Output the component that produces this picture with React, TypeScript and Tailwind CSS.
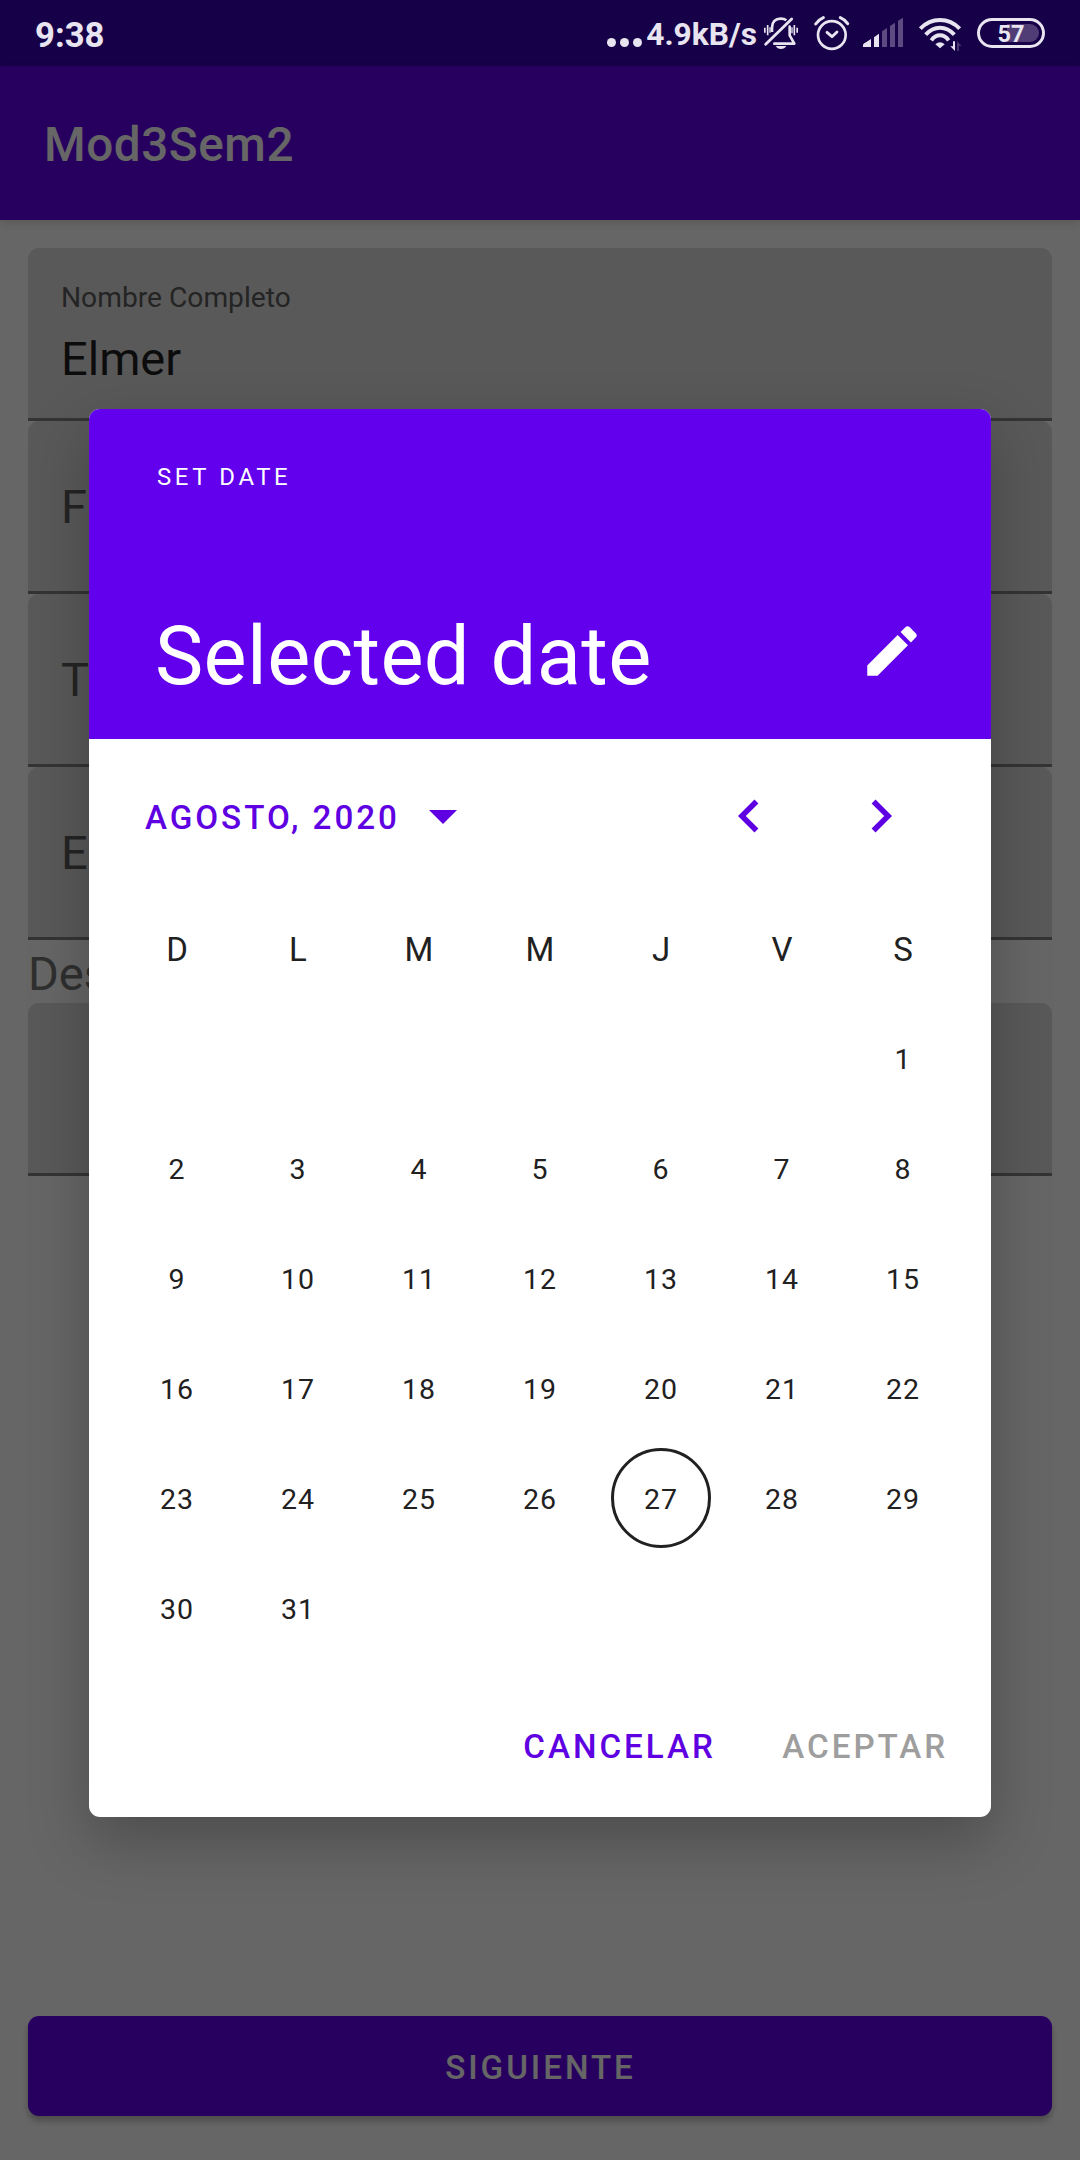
const WEEKDAYS = ["D", "L", "M", "M", "J", "V", "S"];
const FIRST_DAY_OFFSET = 6;
const DAYS_IN_MONTH = 31;
const TODAY = 27;

function MutedBellIcon() {
  return (
    <svg className="h-[38px] w-[38px]" viewBox="516 48 114 114" fill="none" stroke="#e8e5f0" strokeWidth="8">
      <path d="M546 96V83C546 66 556 56 572 56Q583 56 589 61" />
      <path d="M599 80V106L613 131H553" strokeLinejoin="round" strokeLinecap="round" />
      <path d="M527 133L605 57" strokeWidth="8.5" strokeLinecap="round" />
      <path d="M557 138H589Q584 147 573 147Q562 147 557 138Z" fill="#e8e5f0" stroke="none" />
      <path d="M524.5 83V98M533 75V106M613 75V106M621.5 83V98" strokeWidth="5" />
      <path d="M540 82V98M606 82V100" strokeWidth="4" />
    </svg>
  );
}

function AlarmIcon() {
  return (
    <svg className="h-[38px] w-[39px]" viewBox="666 48 117 114" fill="none" stroke="#e8e5f0" strokeWidth="8">
      <circle cx="725.5" cy="105" r="41.5" />
      <path d="M711 97L726 110L741 96" strokeWidth="8.5" strokeLinecap="round" strokeLinejoin="round" />
      <path d="M677 72Q686 59 700 53M751 53Q765 59 773 71" strokeWidth="9" strokeLinecap="round" />
    </svg>
  );
}

function SignalIcon() {
  return (
    <svg className="h-[38px] w-[44px]" viewBox="816 48 132 114" fill="#e8e5f0">
      <path d="M819 141V134Q820 131 828 127L843 117V141Z" />
      <path d="M852 141V112L867 101V141Z" />
      <path d="M876 141V94L891 84V141ZM900 141V78L915 68V141ZM924 141V62L939 53V141Z" fill="#5d4a80" />
    </svg>
  );
}

function WifiIcon() {
  return (
    <svg className="h-[38px] w-[46px]" viewBox="981 48 138 114" fill="none" stroke="#e8e5f0" strokeWidth="12">
      <path d="M991 86Q1016 60 1050 60Q1084 60 1109 86" />
      <path d="M1007 104Q1026 83 1050 83Q1074 83 1093 104" />
      <path d="M1024 121Q1035 106 1050 106Q1065 106 1076 121" />
      <path d="M1036 133Q1050 120 1064 133L1050 145Z" fill="#e8e5f0" stroke="none" />
      <path d="M1089 124H1095V153L1081 139H1089Z" fill="#e8e5f0" stroke="none" />
      <path d="M1101 153V124L1115 138H1107V153Z" fill="#4a3670" stroke="none" />
    </svg>
  );
}

function StatusBar() {
  return (
    <div className="flex h-[66px] shrink-0 items-center bg-[#160048] pt-1 pr-[34px] pl-[35px] text-[#e8e5f0]">
      <span className="text-[34.7px] leading-[44px] font-bold">9:38</span>
      <div className="mt-[15px] mr-1 ml-auto flex gap-1">
        <span className="size-[9px] rounded-full bg-[#e8e5f0]" />
        <span className="size-[9px] rounded-full bg-[#e8e5f0]" />
        <span className="size-[9px] rounded-full bg-[#e8e5f0]" />
      </div>
      <span className="mr-[5px] text-[31.7px] leading-[40px] font-bold">4.9kB/s</span>
      <div className="mr-3">
        <MutedBellIcon />
      </div>
      <div className="mr-[11px]">
        <AlarmIcon />
      </div>
      <div className="mr-[11px]">
        <SignalIcon />
      </div>
      <div className="mr-[14px]">
        <WifiIcon />
      </div>
      <div className="relative mr-px mb-1 flex h-[30px] w-[68px] items-center justify-center rounded-full border-[3px] border-[#e8e5f0]">
        <span className="absolute top-[3px] right-[3px] h-[18px] w-[32px] rounded-r-full bg-[#503d75]" />
        <span className="relative pt-px text-[23.5px] leading-[26px] font-bold">57</span>
      </div>
    </div>
  );
}

function Field({ label, value }: { label?: string; value?: string }) {
  return (
    <div className="h-[173px] rounded-t-[11px] bg-[#dfdfdf]">
      <div className="flex h-full flex-col border-b-[3px] border-[#828282] pl-[33px] text-[#5a5a5a]">
        {value ? (
          <>
            <span className="pt-[33px] text-[28.2px] leading-[33px]">{label}</span>
            <span className="pt-[17px] text-[47px] leading-[55px] text-[#1f1f1f]">{value}</span>
          </>
        ) : (
          <span className="pt-[58px] text-[47px] leading-[55px]">{label}</span>
        )}
      </div>
    </div>
  );
}

function DatePicker() {
  return (
    <div className="h-[1408px] w-[902px] overflow-hidden rounded-[11px] bg-white shadow-[0_24px_60px_rgba(0,0,0,0.25)]">
      <div className="h-[330px] bg-[#6200ee] pt-[54px] pl-[66px] text-white">
        <div className="pl-0.5 text-[23.9px] leading-[28px] tracking-[0.153em]">SET DATE</div>
        <div className="mt-[118px] flex items-start justify-between pr-[66px]">
          <span className="text-[81.3px] leading-[95px] tracking-[0.33px]">Selected date</span>
          <svg className="mt-[9px] size-[66px]" viewBox="0 0 24 24" fill="white">
            <path d="M3 17.25V21h3.75L17.81 9.94l-3.75-3.75L3 17.25zM20.71 7.04c.39-.39.39-1.02 0-1.41l-2.34-2.34c-.39-.39-1.02-.39-1.41 0l-1.83 1.83 3.75 3.75 1.83-1.83z" />
          </svg>
        </div>
      </div>

      <div className="flex h-[154px] items-center pr-[77px] pl-14 text-[#5e00e2]">
        <span className="mt-1 text-[33.2px] leading-[40px] font-medium tracking-[0.0892em]">AGOSTO, 2020</span>
        <svg className="mt-[2px] ml-[29px] h-[14px] w-[28px]" viewBox="0 0 10 5" fill="currentColor">
          <path d="M0 0L5 5L10 0Z" />
        </svg>
        <svg className="ml-auto size-[66px]" viewBox="0 0 24 24" fill="currentColor">
          <path d="M15.41 7.41L14 6l-6 6 6 6 1.41-1.41L10.83 12z" />
        </svg>
        <svg className="ml-[66px] size-[66px]" viewBox="0 0 24 24" fill="currentColor">
          <path d="M10 6L8.59 7.41 13.17 12l-4.58 4.59L10 18l6-6z" />
        </svg>
      </div>

      <div className="ml-[27.5px] grid w-[847px] grid-cols-7 text-[#212121]">
        {WEEKDAYS.map((day, i) => (
          <div key={i} className="flex h-[111px] items-center justify-center pt-[3px] text-[33px]">
            {day}
          </div>
        ))}
        {Array.from({ length: FIRST_DAY_OFFSET }, (_, i) => (
          <div key={`blank-${i}`} className="h-[110px]" />
        ))}
        {Array.from({ length: DAYS_IN_MONTH }, (_, i) => i + 1).map((day) => (
          <div
            key={day}
            className="relative flex h-[110px] items-center justify-center pt-[3px] text-[28.5px] tracking-[0.0333em]"
          >
            {day === TODAY && (
              <span className="absolute top-[3.5px] left-[10.5px] size-[100px] rounded-full border-[3px] border-[#212121]" />
            )}
            {day}
          </div>
        ))}
      </div>

      <div className="flex h-[153px] items-center justify-end gap-[66.5px] pt-[12px] pr-[43px] text-[33.2px] font-medium tracking-[0.0892em]">
        <span className="text-[#5e00e2]">CANCELAR</span>
        <span className="text-[#9e9e9e]">ACEPTAR</span>
      </div>
    </div>
  );
}

export default function App() {
  return (
    <div className="relative flex h-[2160px] w-[1080px] flex-col overflow-hidden bg-white font-[Roboto,sans-serif]">
      <StatusBar />
      <header className="relative flex h-[154px] shrink-0 items-center bg-[#6200ee] pt-1 pl-11 shadow-[0_4px_8px_rgba(0,0,0,0.12)]">
        <h1 className="text-[47.6px] leading-[56px] font-medium tracking-[0.0125em] text-white">Mod3Sem2</h1>
      </header>
      <main className="flex flex-1 flex-col px-7 pt-7 pb-11">
        <Field label="Nombre Completo" value="Elmer" />
        <Field label="F" />
        <Field label="T" />
        <Field label="E" />
        <div className="h-[63px] pt-[6px] text-[47px] leading-[55px] text-[#757575]">Des</div>
        <Field />
        <button className="mt-auto h-[100px] rounded-[11px] bg-[#6200ee] pt-[3px] pl-px text-[33.2px] font-medium tracking-[0.0892em] text-white shadow-[0_5px_6px_rgba(0,0,0,0.26)]">
          SIGUIENTE
        </button>
      </main>

      <div className="absolute inset-x-0 top-[66px] bottom-0 flex items-start justify-center bg-black/60 pt-[343px]">
        <DatePicker />
      </div>
    </div>
  );
}
